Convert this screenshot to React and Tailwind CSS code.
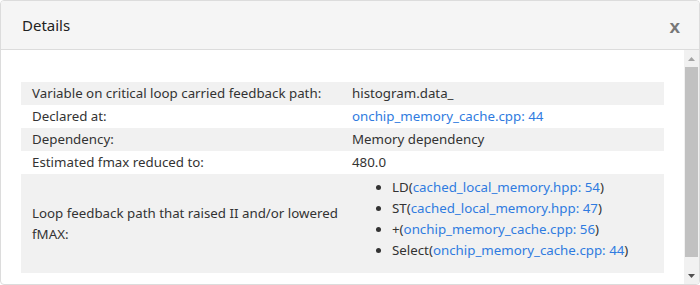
import React from "react";

const rows = [
  { label: "Variable on critical loop carried feedback path:", value: "histogram.data_" },
  { label: "Declared at:", link: "onchip_memory_cache.cpp: 44" },
  { label: "Dependency:", value: "Memory dependency" },
  { label: "Estimated fmax reduced to:", value: "480.0" },
];

const path = [
  { op: "LD", file: "cached_local_memory.hpp: 54" },
  { op: "ST", file: "cached_local_memory.hpp: 47" },
  { op: "+", file: "onchip_memory_cache.cpp: 56" },
  { op: "Select", file: "onchip_memory_cache.cpp: 44" },
];

export default function App() {
  return (
    <div className="w-[700px] h-[285px] bg-white font-['Noto_Sans',sans-serif] text-[13.3px] text-[#333]">
      <div className="h-full border border-[#dcdcdc] rounded-[4px] flex flex-col overflow-hidden">
        {/* header */}
        <div className="h-[49px] shrink-0 bg-[#f5f5f5] border-b border-[#dcdcdc] flex items-center justify-between pl-[21px] pr-[19px]">
          <span className="text-[15px] text-[#222]">Details</span>
          <span className="font-['Liberation_Sans',sans-serif] font-bold text-[19px] text-[#777] mt-[5px]">x</span>
        </div>

        {/* body */}
        <div className="flex flex-1 min-h-0">
          <div className="flex-1 pl-[20px] pr-[20px] pt-[32px]">
            <table className="w-full border-collapse">
              <tbody>
                {rows.map((r, i) => (
                  <tr key={i} className={i % 2 === 0 ? "bg-[#f1f1f1]" : "bg-white"}>
                    <td className="w-[320px] h-[23px] pl-[11px] align-middle">{r.label}</td>
                    <td className="h-[23px] pl-[11px] align-middle">
                      {r.link ? <span className="text-[#2f7be0]">{r.link}</span> : r.value}
                    </td>
                  </tr>
                ))}
                <tr className="bg-[#f1f1f1]">
                  <td className="w-[320px] h-[99px] pl-[11px] pr-[2px] align-middle leading-[21px]">
                    Loop feedback path that raised II and/or lowered fMAX:
                  </td>
                  <td className="h-[99px] align-middle">
                    <ul className="pl-[35px] leading-[21px] -mt-[9px]">
                      {path.map((p, i) => (
                        <li key={i} className="flex items-center">
                          <span className="w-[5px] h-[5px] rounded-full bg-[#333] mr-[11px] shrink-0" />
                          <span>
                            {p.op}(<span className="text-[#2f7be0]">{p.file}</span>)
                          </span>
                        </li>
                      ))}
                    </ul>
                  </td>
                </tr>
              </tbody>
            </table>
          </div>

          {/* scrollbar */}
          <div className="w-[15px] shrink-0 bg-[#f1f1f1] flex flex-col items-center">
            <div className="h-[17px] flex items-center justify-center">
              <svg width="7" height="4" viewBox="0 0 7 4"><path d="M3.5 0L7 4H0z" fill="#a3a3a3" /></svg>
            </div>
            <div className="w-[13px] h-[190px] bg-[#c1c1c1]" />
            <div className="flex-1" />
            <div className="h-[17px] flex items-center justify-center">
              <svg width="7" height="4" viewBox="0 0 7 4"><path d="M0 0H7L3.5 4z" fill="#505050" /></svg>
            </div>
          </div>
        </div>
      </div>
    </div>
  );
}
